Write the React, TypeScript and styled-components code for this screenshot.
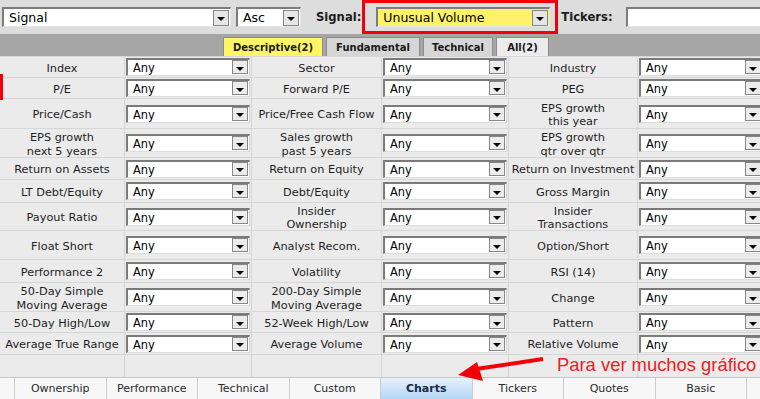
import React from "react";
import styled, { createGlobalStyle } from "styled-components";

const GlobalStyle = createGlobalStyle`
  html, body {
    margin: 0;
    padding: 0;
    background: #ebebeb;
  }
  body {
    font-family: "DejaVu Sans", Verdana, sans-serif;
  }
`;

const Page = styled.div`
  position: relative;
  width: 760px;
  height: 399px;
  overflow: hidden;
  background: #ebebeb;
`;

// ---- top bar ----
const TopBar = styled.div`
  display: flex;
  align-items: center;
  height: 34px;
  padding-left: 2px;
  background: #dddddd;
`;

interface ITopSelect {
  $w: number;
  $mr?: number;
  $yellow?: boolean;
}
const TopSelect = styled.div<ITopSelect>`
  flex: none;
  box-sizing: border-box;
  display: flex;
  align-items: center;
  justify-content: space-between;
  width: ${(p) => p.$w}px;
  height: 20px;
  margin-right: ${(p) => p.$mr || 0}px;
  padding-left: 5px;
  background: ${(p) => (p.$yellow ? "#fef26a" : "#ffffff")};
  border-style: solid;
  border-width: 2px 1px 1px 2px;
  border-color: #7c7c7c #e6e6e6 #e6e6e6 #7c7c7c;
  font-size: 12.5px;
  color: #000;
`;

const TopArrow = styled.span`
  box-sizing: border-box;
  display: flex;
  align-items: center;
  justify-content: center;
  width: 16px;
  height: 16px;
  margin-right: 1px;
  background: #e6e6e6;
  border: 1px solid #868686;
  &::after {
    content: "";
    border-left: 4px solid transparent;
    border-right: 4px solid transparent;
    border-top: 4px solid #000;
    margin-top: 2px;
  }
`;

const BarLabel = styled.span<{ $mr: number }>`
  flex: none;
  margin-right: ${(p) => p.$mr}px;
  font-size: 11.6px;
  font-weight: bold;
  color: #1c1c1c;
`;

const Highlight = styled.div`
  flex: none;
  box-sizing: border-box;
  display: flex;
  align-items: center;
  width: 196px;
  height: 34px;
  margin-right: 3px;
  padding: 0 5px 0 11px;
  border: 3px solid #f2000a;
`;

const TickerInput = styled.div`
  flex: none;
  box-sizing: border-box;
  width: 150px;
  height: 20px;
  background: #fff;
  border-style: solid;
  border-width: 2px 1px 1px 2px;
  border-color: #7c7c7c #e6e6e6 #e6e6e6 #7c7c7c;
`;

// ---- filter tabs ----
const TabStrip = styled.div`
  display: flex;
  align-items: flex-end;
  gap: 3px;
  height: 22px;
  padding-left: 223px;
  background: #a6a6a6;
`;

const Tab = styled.div<{ $w: number; $bg: string }>`
  box-sizing: border-box;
  display: flex;
  align-items: center;
  justify-content: center;
  width: ${(p) => p.$w}px;
  height: 19px;
  padding-top: 1px;
  background: ${(p) => p.$bg};
  border: 1px solid #8c8c8c;
  border-bottom: none;
  font-size: 10px;
  font-weight: bold;
  color: #1a1a1a;
`;

// ---- filters grid ----
const FilterGrid = styled.div`
  display: grid;
  grid-template-columns: 124px 126px 129px 126px 128px 130px;
  grid-template-rows: 20px 20px 29px 28px 21px 22px 27px 28px 22px 28px 20px 21px 22px;
  gap: 1px;
  border-top: 1px solid #d6d6d6;
  background: #d6d6d6;
`;

const LabelCell = styled.div`
  box-sizing: border-box;
  display: flex;
  align-items: center;
  justify-content: center;
  padding-top: 3px;
  background: #ebebeb;
  text-align: center;
  white-space: pre-line;
  font-size: 11.3px;
  line-height: 13.5px;
  color: #1e1e1e;
`;

const SelectCell = styled.div`
  display: flex;
  align-items: center;
  padding-left: 1px;
  background: #ebebeb;
`;

const FilterSelect = styled.div`
  flex: none;
  box-sizing: border-box;
  display: flex;
  align-items: flex-start;
  justify-content: space-between;
  width: 124px;
  height: 18px;
  padding-left: 5px;
  background: #fff;
  border-style: solid;
  border-width: 2px 1px 1px 2px;
  border-color: #7a7a7a #d2d2d2 #dcdcdc #7a7a7a;
  font-size: 11.4px;
  line-height: 16px;
  color: #000;
`;

const FilterArrow = styled.span`
  box-sizing: border-box;
  display: flex;
  align-items: center;
  justify-content: center;
  width: 16px;
  height: 14px;
  margin-right: 1px;
  background: #ececec;
  border: 1px solid #878787;
  &::after {
    content: "";
    border-left: 4px solid transparent;
    border-right: 4px solid transparent;
    border-top: 4px solid #000;
    margin-top: 3px;
  }
`;

// ---- view tabs ----
const ViewBar = styled.div`
  display: grid;
  grid-template-columns: 14px repeat(8, 1fr) 13px;
  gap: 1px;
  height: 22px;
  box-sizing: border-box;
  border-top: 1px solid #c6c6c6;
  background: #cccccc;
`;

const ViewTab = styled.div<{ $active?: boolean }>`
  display: flex;
  align-items: center;
  justify-content: center;
  background: ${(p) =>
    p.$active ? "linear-gradient(#e6f1fc, #b3d6f6)" : "#f7f7f7"};
  font-size: 11px;
  font-weight: ${(p) => (p.$active ? "bold" : "normal")};
  color: ${(p) => (p.$active ? "#1b2a48" : "#2a2a2a")};
`;

// ---- annotations over the page ----
const RedMarker = styled.div`
  position: absolute;
  left: 0;
  top: 74px;
  width: 3px;
  height: 26px;
  background: #f2000a;
`;

const Note = styled.div`
  position: absolute;
  left: 557px;
  top: 356px;
  white-space: nowrap;
  font-family: "Liberation Sans", Arial, sans-serif;
  font-size: 18.4px;
  line-height: 18px;
  color: #ec1c26;
`;

const ArrowSvg = styled.svg`
  position: absolute;
  left: 450px;
  top: 350px;
`;

const rows: string[][] = [
  ["Index", "Sector", "Industry"],
  ["P/E", "Forward P/E", "PEG"],
  ["Price/Cash", "Price/Free Cash Flow", "EPS growth\nthis year"],
  ["EPS growth\nnext 5 years", "Sales growth\npast 5 years", "EPS growth\nqtr over qtr"],
  ["Return on Assets", "Return on Equity", "Return on Investment"],
  ["LT Debt/Equity", "Debt/Equity", "Gross Margin"],
  ["Payout Ratio", "Insider\nOwnership", "Insider\nTransactions"],
  ["Float Short", "Analyst Recom.", "Option/Short"],
  ["Performance 2", "Volatility", "RSI (14)"],
  ["50-Day Simple\nMoving Average", "200-Day Simple\nMoving Average", "Change"],
  ["50-Day High/Low", "52-Week High/Low", "Pattern"],
  ["Average True Range", "Average Volume", "Relative Volume"],
  ["", "", ""],
];

const tabs = [
  { name: "Descriptive(2)", w: 100, bg: "#fff566" },
  { name: "Fundamental", w: 94, bg: "#d6d6d6" },
  { name: "Technical", w: 70, bg: "#d6d6d6" },
  { name: "All(2)", w: 53, bg: "#ececec" },
];

const views = ["Ownership", "Performance", "Technical", "Custom", "Charts", "Tickers", "Quotes", "Basic"];

const App = () => {
  return (
    <Page>
      <GlobalStyle />
      <TopBar>
        <TopSelect $w={229} $mr={5}>
          Signal
          <TopArrow />
        </TopSelect>
        <TopSelect $w={65} $mr={15}>
          Asc
          <TopArrow />
        </TopSelect>
        <BarLabel $mr={1}>Signal:</BarLabel>
        <Highlight>
          <TopSelect $w={174} $yellow>
            Unusual Volume
            <TopArrow />
          </TopSelect>
        </Highlight>
        <BarLabel $mr={13}>Tickers:</BarLabel>
        <TickerInput />
      </TopBar>

      <TabStrip>
        {tabs.map((t) => (
          <Tab key={t.name} $w={t.w} $bg={t.bg}>
            {t.name}
          </Tab>
        ))}
      </TabStrip>

      <FilterGrid>
        {rows.map((row, i) =>
          row.map((label, j) => (
            <React.Fragment key={i + "-" + j}>
              <LabelCell>{label}</LabelCell>
              <SelectCell>
                {label && (
                  <FilterSelect>
                    Any
                    <FilterArrow />
                  </FilterSelect>
                )}
              </SelectCell>
            </React.Fragment>
          ))
        )}
      </FilterGrid>

      <ViewBar>
        <ViewTab />
        {views.map((v) => (
          <ViewTab key={v} $active={v === "Charts"}>
            {v}
          </ViewTab>
        ))}
        <ViewTab />
      </ViewBar>

      <RedMarker />
      <Note>Para ver muchos gráfico</Note>
      <ArrowSvg width="100" height="40" viewBox="0 0 100 40">
        <line x1="93" y1="9" x2="26" y2="19" stroke="#f2000a" strokeWidth="4" />
        <polygon points="8,25 27,12 33,31" fill="#f2000a" />
      </ArrowSvg>
    </Page>
  );
};

export default App;
